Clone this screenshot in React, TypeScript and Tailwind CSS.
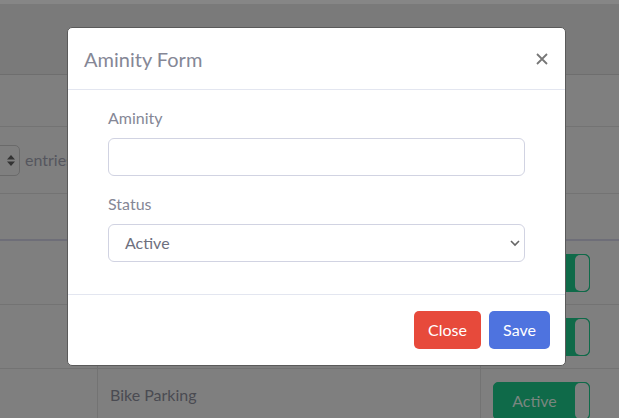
import React from "react";

const rows = [
  { name: "", status: "Active" },
  { name: "", status: "Active" },
  { name: "Bike Parking", status: "Active" },
];

const StatusToggle: React.FC<{ label: string }> = ({ label }) => (
  <div className="flex h-[38px] w-[97px] rounded-[5px] border border-[#0f6a49] bg-[#0f6a49] overflow-hidden">
    <span className="flex-1 flex items-center justify-center text-[#7a8680] text-base">
      {label}
    </span>
    <span className="w-[14px] rounded-[5px] bg-[#7f7f7f]" />
  </div>
);

export default function App() {
  return (
    <div className="relative h-[418px] w-[619px] overflow-hidden bg-[#7f7f7f] font-['Lato','Liberation_Sans',sans-serif]">
      {/* Page behind the backdrop */}
      <div className="h-[4px] bg-[#868686]" />
      <div className="h-[71px] bg-[#7a7a7a] border-b border-[#6e6e6e]" />
      <div className="h-[52px] border-b border-[#737373]" />
      <div className="h-[67px] border-b border-[#737373] flex items-center gap-[5px]">
        <div className="ml-[-12px] h-[31px] w-[32px] rounded-[5px] border border-[#6a6a6a] flex items-center justify-end pr-[4px]">
          <svg width="8" height="11" viewBox="0 0 8 11">
            <path d="M4 0 L8 4.5 H0 Z M4 11 L8 6.5 H0 Z" fill="#333" />
          </svg>
        </div>
        <span className="text-base text-[#55565e]">entries</span>
      </div>
      <div className="h-[47px] border-b-2 border-[#6e6e78]" />
      {rows.map((r, i) => (
        <div
          key={i}
          className="grid grid-cols-[98px_383px_1fr] h-[64px] border-b border-[#737373]"
        >
          <div className="border-r border-[#737373]" />
          <div className="border-r border-[#737373] px-3 pt-[14px] text-base leading-6 text-[#4a4b52]">
            {r.name}
          </div>
          <div className="pl-[12px] pt-[13px]">
            <StatusToggle label={r.status} />
          </div>
        </div>
      ))}

      {/* Modal */}
      <div className="absolute inset-0 pl-[67px] pt-[27px]">
        <div className="w-[499px] rounded-[5px] border border-[#5a5a5a] bg-white">
          <div className="flex items-center justify-between h-[62px] pl-[16px] pr-[17px] border-b border-[#e3e6f0]">
            <h5 className="text-[20px] leading-[30px] text-[#858796]">Aminity Form</h5>
            <svg width="12" height="12" viewBox="0 0 12 12">
              <path d="M1 1 L11 11 M11 1 L1 11" stroke="#777" strokeWidth="1.8" />
            </svg>
          </div>
          <div className="px-[40px] pt-[16px] pb-[16px]">
            <label className="block mb-2 text-base leading-6 text-[#858796]">Aminity</label>
            <div className="h-[38px] rounded-[6px] border border-[#d1d3e2] mb-4" />
            <label className="block mb-2 text-base leading-6 text-[#858796]">Status</label>
            <div className="h-[38px] rounded-[6px] border border-[#d1d3e2] mb-4 flex items-center justify-between pl-[16px] pr-[4px]">
              <span className="text-base text-[#6e707e]">Active</span>
              <svg width="10" height="7" viewBox="0 0 10 7">
                <path d="M1 1 L5 5 L9 1" stroke="#666" strokeWidth="1.6" fill="none" />
              </svg>
            </div>
          </div>
          <div className="flex justify-end gap-2 pl-4 pr-[15px] py-4 border-t border-[#e3e6f0]">
            <button className="h-[38px] w-[67px] rounded-[5px] bg-[#e74a3b] text-white text-base">
              Close
            </button>
            <button className="h-[38px] w-[61px] rounded-[5px] bg-[#4e73df] text-white text-base">
              Save
            </button>
          </div>
        </div>
      </div>
    </div>
  );
}
